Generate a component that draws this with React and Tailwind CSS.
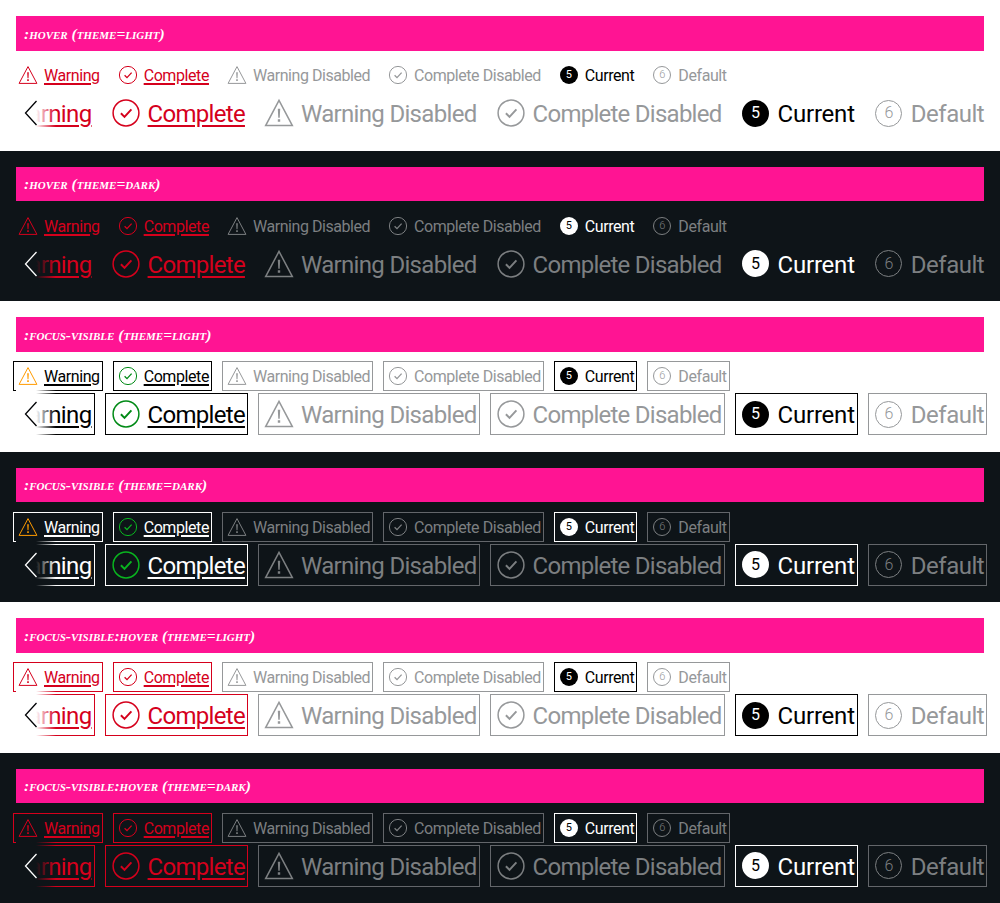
import React from 'react'

const light = {
  bg: 'bg-white',
  fade: 'from-white',
  chevron: 'text-[#010205]',
  current: 'text-black',
  badge: 'bg-black text-white',
  muted: 'text-[#96989a]',
  mutedLine: 'outline-[#96989a]',
  strong: 'outline-black',
}

const dark = {
  bg: 'bg-[#0e1418]',
  fade: 'from-[#0e1418]',
  chevron: 'text-white',
  current: 'text-white',
  badge: 'bg-white text-black',
  muted: 'text-[#7c7f81]',
  mutedLine: 'outline-[#63666a]',
  strong: 'outline-white',
}

const sections = [
  { title: ':hover (theme=light)', theme: light, warnIcon: 'text-[#d5001c]', okIcon: 'text-[#d5001c]', label: 'text-[#d5001c]', line: 'outline-transparent', off: 'outline-transparent', cur: 'outline-transparent' },
  { title: ':hover (theme=dark)', theme: dark, warnIcon: 'text-[#d5001c]', okIcon: 'text-[#d5001c]', label: 'text-[#d5001c]', line: 'outline-transparent', off: 'outline-transparent', cur: 'outline-transparent' },
  { title: ':focus-visible (theme=light)', theme: light, warnIcon: 'text-[#ff9b00]', okIcon: 'text-[#018a16]', label: 'text-black', line: 'outline-black', off: light.mutedLine, cur: light.strong },
  { title: ':focus-visible (theme=dark)', theme: dark, warnIcon: 'text-[#ff9b00]', okIcon: 'text-[#09b51f]', label: 'text-white', line: 'outline-white', off: dark.mutedLine, cur: dark.strong },
  { title: ':focus-visible:hover (theme=light)', theme: light, warnIcon: 'text-[#d5001c]', okIcon: 'text-[#d5001c]', label: 'text-[#d5001c]', line: 'outline-[#d5001c]', off: light.mutedLine, cur: light.strong },
  { title: ':focus-visible:hover (theme=dark)', theme: dark, warnIcon: 'text-[#d5001c]', okIcon: 'text-[#d5001c]', label: 'text-[#d5001c]', line: 'outline-[#d5001c]', off: dark.mutedLine, cur: dark.strong },
]

const tracking = {
  Warning: ['tracking-[-0.42px]', 'tracking-[-0.62px]'],
  Complete: ['tracking-[-0.42px]', 'tracking-[-0.7px]'],
  'Warning Disabled': ['tracking-[-0.45px]', 'tracking-[-0.68px]'],
  'Complete Disabled': ['tracking-[-0.45px]', 'tracking-[-0.74px]'],
  Current: ['tracking-[-0.42px]', 'tracking-[-0.2px]'],
  Default: ['tracking-[-0.42px]', 'tracking-[-0.5px]'],
}

function WarningIcon({ className }) {
  return (
    <svg viewBox="0 0 24 24" fill="none" className={className}>
      <path d="M12 3.6 20.9 20.4H3.1Z" stroke="currentColor" strokeWidth="1" strokeLinejoin="miter" />
      <path d="M11.2 9.2h1.6l-.3 6h-1ZM11.2 16.2h1.6v1.7h-1.6Z" fill="currentColor" />
    </svg>
  )
}

function CheckIcon({ className }) {
  return (
    <svg viewBox="0 0 24 24" fill="none" className={className}>
      <circle cx="12" cy="12" r="8.6" stroke="currentColor" strokeWidth="1" />
      <path d="M8.6 12.2l2.4 2.4 4.6-5" stroke="currentColor" strokeWidth="1.3" />
    </svg>
  )
}

function Badge({ n, filled, large, theme }) {
  return (
    <span className={large ? 'flex h-9 w-9 shrink-0 items-center justify-center' : 'flex h-6 w-6 shrink-0 items-center justify-center'}>
      <span
        className={`flex items-center justify-center rounded-full ${large ? 'h-[27px] w-[27px] text-[16px]' : 'h-[18px] w-[18px] text-[11px]'} ${
          filled ? theme.badge : `border border-current font-light ${theme.muted}`
        }`}
      >
        {n}
      </span>
    </span>
  )
}

function Item({ large, outline, color, underline, icon, label, first }) {
  const line = large ? 'underline decoration-2 underline-offset-[3px]' : 'underline decoration-[1.5px] underline-offset-[2px]'
  return (
    <span
      className={`flex shrink-0 items-center gap-1 outline outline-1 outline-offset-2 ${outline} ${color} ${
        large ? 'text-[24px] leading-9' : 'text-[16px] leading-6'
      } ${first ? '-ml-[48px]' : ''}`}
    >
      {icon}
      <span className={`${large ? 'h-9' : 'h-6'} pt-px ${tracking[label][large ? 1 : 0]} ${underline ? line : ''}`}>{label}</span>
    </span>
  )
}

function Row({ s, large }) {
  const t = s.theme
  const icon = large ? 'h-9 w-9 shrink-0' : 'h-6 w-6 shrink-0'
  return (
    <>
      <Item large={large} first={large} outline={s.line} color={s.label} underline icon={<WarningIcon className={`${icon} ${s.warnIcon}`} />} label="Warning" />
      <Item large={large} outline={s.line} color={s.label} underline icon={<CheckIcon className={`${icon} ${s.okIcon}`} />} label="Complete" />
      <Item large={large} outline={s.off} color={t.muted} icon={<WarningIcon className={icon} />} label="Warning Disabled" />
      <Item large={large} outline={s.off} color={t.muted} icon={<CheckIcon className={icon} />} label="Complete Disabled" />
      <Item large={large} outline={s.cur} color={t.current} icon={<Badge n={5} filled large={large} theme={t} />} label="Current" />
      <Item large={large} outline={s.off} color={t.muted} icon={<Badge n={6} large={large} theme={t} />} label="Default" />
    </>
  )
}

function Section({ s }) {
  const t = s.theme
  return (
    <section className={`h-[150.5px] overflow-hidden p-4 ${t.bg}`}>
      <h2 className="flex h-[34.6px] items-center bg-[#ff1493] px-2 font-['Liberation_Serif',serif] text-[15.5px] font-bold italic text-white [font-variant:small-caps]">
        {s.title}
      </h2>
      <div className="mt-[12.5px] flex gap-4">
        <Row s={s} />
      </div>
      <div className="relative mt-[8.2px]">
        <div className="-mr-1 -my-1 flex gap-4 overflow-hidden py-1 pr-1">
          <Row s={s} large />
        </div>
        <div className={`absolute -bottom-1 left-0 -top-1 flex w-[40px] items-center bg-linear-to-r from-50% to-transparent ${t.fade}`}>
          <svg viewBox="0 0 14 26" fill="none" className={`ml-[8px] h-[26px] w-[14px] ${t.chevron}`}>
            <path d="M12.5 1 1.5 13l11 12" stroke="currentColor" strokeWidth="1.3" />
          </svg>
        </div>
      </div>
    </section>
  )
}

export default function App() {
  return (
    <div className="font-['Roboto',sans-serif]">
      {sections.map(s => (
        <Section key={s.title} s={s} />
      ))}
    </div>
  )
}
